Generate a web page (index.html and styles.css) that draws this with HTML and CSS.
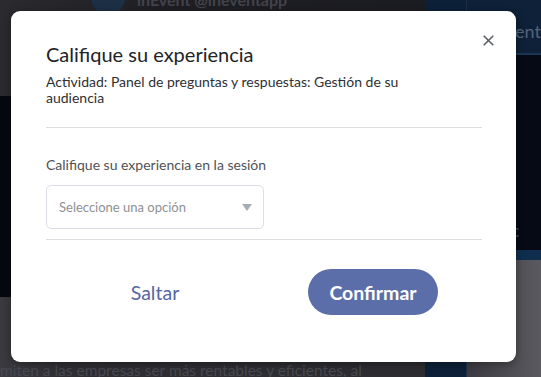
FILE: index.html
```html
<!DOCTYPE html>
<html lang="es">
<head>
<meta charset="utf-8">
<title>Califique su experiencia</title>
<link rel="stylesheet" href="styles.css">
</head>
<body>
<div class="page">
  <div class="main">
    <div class="hdr">
      <span class="avatar"></span>
      <span class="handle">inEvent @ineventapp</span>
    </div>
    <div class="video"></div>
    <div class="article">
      <p class="article-text">miten a las empresas ser más rentables y eficientes, al</p>
    </div>
  </div>
  <div class="side-a"></div>
  <div class="side-b">
    <div class="sb-top"><span class="sb-brand">inEvent</span></div>
    <div class="sb-mid"><span class="sb-mac">Mac</span></div>
    <div class="sb-band"></div>
    <div class="sb-bottom"></div>
  </div>
</div>

<div class="modal" role="dialog">
  <button class="close" aria-label="Cerrar">
    <svg width="11" height="11" viewBox="0 0 11 11"><path d="M0.7 0.7L10.3 10.3M10.3 0.7L0.7 10.3" stroke="#555a60" stroke-width="1.5" fill="none"/></svg>
  </button>
  <h2 class="title">Califique su experiencia</h2>
  <p class="subtitle">Actividad: Panel de preguntas y respuestas: Gestión de su audiencia</p>
  <div class="sep sep-top"></div>
  <div class="label">Califique su experiencia en la sesión</div>
  <div class="select">
    <span class="placeholder">Seleccione una opción</span>
    <span class="caret"></span>
  </div>
  <div class="sep sep-bottom"></div>
  <div class="actions">
    <div class="action-cell"><button class="skip">Saltar</button></div>
    <div class="action-cell"><button class="confirm">Confirmar</button></div>
  </div>
</div>
</body>
</html>
```
FILE: styles.css
```css
* { box-sizing: border-box; }
html, body { margin: 0; padding: 0; }
body {
  width: 541px;
  height: 377px;
  overflow: hidden;
  font-family: Lato, "Open Sans", "Liberation Sans", sans-serif;
  background: #2b2b30;
  position: relative;
}
.page {
  display: flex;
  width: 541px;
  height: 377px;
}
.main {
  width: 452px;
  display: flex;
  flex-direction: column;
}
.hdr {
  height: 96px;
  background: linear-gradient(90deg, #2a2a2f 0%, #1e1e23 40%, #1b1c22 100%);
  display: flex;
  align-items: flex-start;
  padding-left: 91px;
  gap: 12px;
}
.avatar {
  width: 34px;
  height: 34px;
  border-radius: 50%;
  background: #1d2f44;
  margin-top: -19px;
}
.handle {
  color: #43434a;
  font-weight: 700;
  font-size: 16px;
  line-height: 16px;
  margin-top: -8px;
}
.video {
  height: 201px;
  background: #05080f;
}
.article {
  flex: 1;
  background: linear-gradient(90deg, #3a3a40 0%, #2e2e33 15%, #2c2c31 100%);
  display: flex;
  align-items: flex-end;
}
.article-text {
  margin: 0 0 -3px 0;
  color: #48484f;
  font-size: 15.5px;
  line-height: 20px;
  white-space: nowrap;
}
.side-a {
  width: 44px;
  background: #0c2037;
}
.side-b {
  flex: 1;
  display: flex;
  flex-direction: column;
  border-left: 1px solid #1b3048;
}
.sb-top {
  height: 55px;
  background: #0e2138;
  border-bottom: 2px solid #1a3654;
  padding-top: 20px;
  padding-left: 15px;
}
.sb-brand {
  color: #55637a;
  font-size: 18px;
  line-height: 22px;
  white-space: nowrap;
}
.sb-mid {
  height: 195px;
  background: #060a15;
  display: flex;
  align-items: flex-end;
  padding-bottom: 9px;
}
.sb-mac {
  color: #4e5464;
  font-size: 17px;
  margin-left: 20px;
  white-space: nowrap;
}
.sb-band {
  height: 10px;
  background: #0f2e4d;
}
.sb-bottom {
  flex: 1;
  background: linear-gradient(90deg, #3a3a40, #5a5a60);
}

/* modal */
.modal {
  position: absolute;
  left: 11px;
  top: 11px;
  width: 505px;
  height: 351px;
  background: #ffffff;
  border-radius: 9px;
  padding: 31px 34px 0 35px;
  box-shadow: 0 2px 8px rgba(0,0,0,0.35);
}
.close {
  position: absolute;
  top: 24px;
  right: 22px;
  width: 11px;
  height: 11px;
  padding: 0;
  border: 0;
  background: none;
  display: flex;
}
.title {
  margin: 0;
  font-size: 20px;
  line-height: 24px;
  font-weight: 400;
  color: #222326;
}
.subtitle {
  margin: 8px 0 0 0;
  font-size: 14px;
  line-height: 16px;
  color: #2e3033;
  padding-right: 36px;
}
.sep {
  height: 1px;
  background: #dcdde0;
}
.sep-top { margin-top: 21px; }
.label {
  margin-top: 28px;
  font-size: 14px;
  line-height: 17px;
  color: #505256;
}
.select {
  margin-top: 12px;
  width: 218px;
  height: 44px;
  border: 1px solid #dcdde8;
  border-radius: 5px;
  display: flex;
  align-items: center;
  justify-content: space-between;
  padding: 0 11px 0 12px;
}
.placeholder {
  font-size: 13px;
  color: #8e9094;
}
.caret {
  width: 0;
  height: 0;
  border-left: 5px solid transparent;
  border-right: 5px solid transparent;
  border-top: 7px solid #a5adb5;
}
.sep-bottom { margin-top: 10px; }
.actions {
  margin-top: 29px;
  display: flex;
}
.action-cell {
  flex: 1;
  display: flex;
  justify-content: center;
  align-items: center;
}
.skip {
  border: 0;
  background: none;
  font-family: inherit;
  font-size: 19.5px;
  color: #5566a3;
  padding: 0;
}
.confirm {
  width: 130px;
  height: 46px;
  border: 0;
  border-radius: 23px;
  background: #5b6ea9;
  color: #ffffff;
  font-family: inherit;
  font-weight: 700;
  font-size: 19.5px;
  padding: 0;
}
```
